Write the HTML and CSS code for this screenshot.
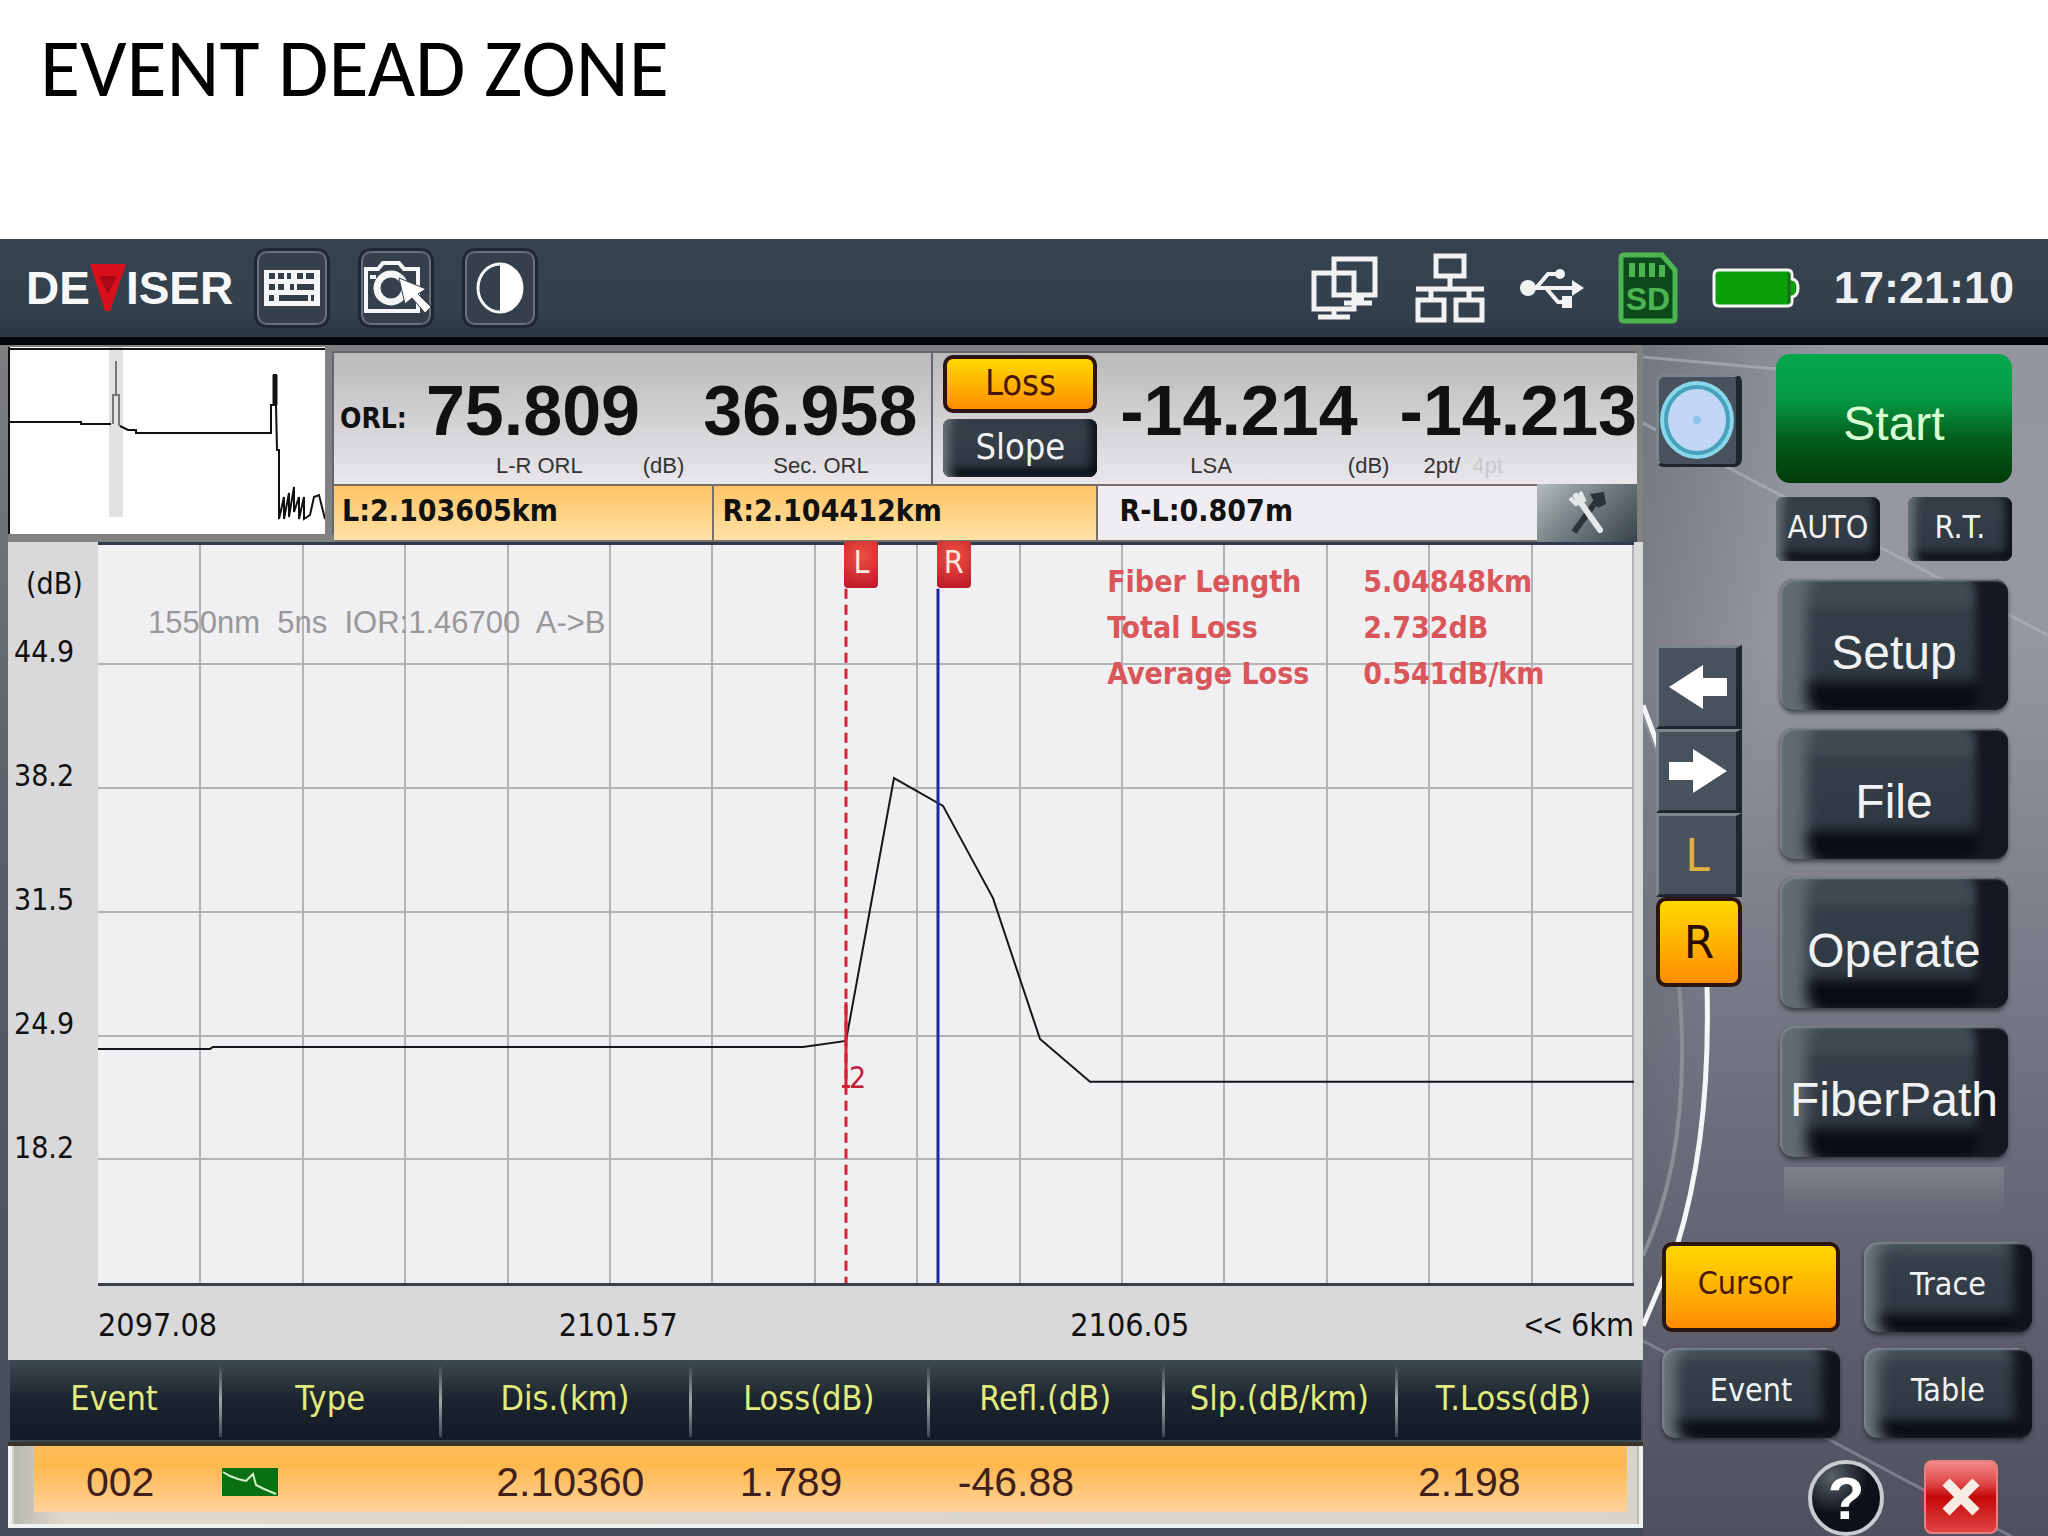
FILE: index.html
```html
<!DOCTYPE html>
<html lang="en">
<head>
    <meta charset="UTF-8">
    <meta name="viewport" content="width=device-width, initial-scale=1.0">
    <title>Event Dead Zone</title>
    <link rel="stylesheet" href="styles.css">
</head>
<body>

    <h1>EVENT DEAD ZONE</h1>

    <div class="device">

        <!-- Top bar -->
        <header class="topbar">
            <div class="logo">
                <span>DE</span>
                <svg width="36" height="48" viewBox="0 0 36 48"><path d="M0 0H36L20 47H15Z" fill="#d8101c"/><path d="M9 12L18 30L27 12" fill="#a90814"/></svg>
                <span>ISER</span>
            </div>
            <div class="tools">
                <button class="tool" aria-label="Keyboard">
                    <svg width="60" height="60" viewBox="0 0 60 60">
                        <path d="M2 12H58V48H2Z" fill="#f4f6f8"/>
                        <path d="M7 18H13M16 18H22M25 18H29M35 18H41M44 18H52M7 29H13M16 29H22M28 29H32M35 29H52M7 40H12M17 40H46M49 40H52" stroke="#333e48" stroke-width="6"/>
                    </svg>
                </button>
                <button class="tool" aria-label="Screenshot">
                    <svg width="70" height="60" viewBox="0 0 70 60">
                        <path d="M5 11H17L22 5H38L43 11H57V53H5Z" fill="none" stroke="#f4f6f8" stroke-width="4"/>
                        <path d="M9 19H15" stroke="#f4f6f8" stroke-width="4"/>
                        <circle cx="30" cy="30" r="14" fill="none" stroke="#f4f6f8" stroke-width="7"/>
                        <path d="M38 20L44 46L51 40L64 55L70 49L57 36L65 31Z" fill="#fff" stroke="#333e48" stroke-width="1"/>
                    </svg>
                </button>
                <button class="tool" aria-label="Contrast">
                    <svg width="60" height="60" viewBox="0 0 60 60">
                        <ellipse cx="30" cy="30" rx="22" ry="24" fill="none" stroke="#f4f6f8" stroke-width="3"/>
                        <path d="M30 6A22 24 0 0 1 30 54Z" fill="#fff"/>
                    </svg>
                </button>
            </div>
            <div class="status">
                <svg width="70" height="70" viewBox="0 0 70 70" fill="none" stroke="#f0f2f4" stroke-width="5">
                    <path d="M24 6H65V42H24ZM4 20H44V56H4Z"/>
                    <path d="M34 50H62M24 56V62M8 64H40"/>
                    <path d="M44 45H54" stroke-width="6"/>
                </svg>
                <svg width="72" height="72" viewBox="0 0 72 72" fill="none" stroke="#f0f2f4" stroke-width="5">
                    <path d="M22 4H50V24H22ZM4 48H30V68H4ZM42 48H68V68H42Z"/>
                    <path d="M36 24V36M2 37H70M17 37V48M55 37V48"/>
                </svg>
                <svg width="64" height="42" viewBox="0 0 64 42" fill="none" stroke="#f0f2f4" stroke-width="4">
                    <circle cx="8" cy="21" r="8" fill="#f0f2f4" stroke="none"/>
                    <path d="M8 21H55M16 21L28 7H38M26 21L38 35H46"/>
                    <path d="M52 13L64 21L52 29Z" fill="#f0f2f4" stroke="none"/>
                    <circle cx="40" cy="7" r="5" fill="#f0f2f4" stroke="none"/>
                    <path d="M42 29H52V41H42Z" fill="#f0f2f4" stroke="none"/>
                </svg>
                <svg width="60" height="72" viewBox="0 0 60 72">
                    <path d="M5 3H44L57 18V66Q57 69 54 69H6Q3 69 3 66V6Q3 3 6 3Z" fill="#0c4a1c" stroke="#4db452" stroke-width="5"/>
                    <path d="M14 11V25M24 11V25M34 11V25M44 13V25" stroke="#4db452" stroke-width="6"/>
                    <text x="30" y="58" class="sd-text">SD</text>
                </svg>
                <svg width="88" height="42" viewBox="0 0 88 42">
                    <path d="M7 3H76Q80 3 80 8V12Q86 13 86 21Q86 29 80 30V34Q80 39 76 39H7Q2 39 2 34V8Q2 3 7 3Z" fill="#0aa00a" stroke="#f4f6f8" stroke-width="3"/>
                    <path d="M77 6V36" stroke="#1f6b24" stroke-width="3"/>
                </svg>
                <time>17:21:10</time>
            </div>
        </header>

        <div class="workspace">
            <main class="main">

                <section class="summary">
                    <svg class="overview" viewBox="0 0 317 187" preserveAspectRatio="none">
                        <path d="M108 0V170" stroke="#e2e2e2" stroke-width="14"/>
                        <path d="M1 0V187M1 2H317" stroke="#111" stroke-width="2" fill="none"/>
                        <path d="M1 62V75H73V77H103" stroke="#111" stroke-width="2" fill="none"/>
                        <path d="M105 77V48H108V14V48H111V79" stroke="#777" stroke-width="2" fill="none"/>
                        <path d="M112 79L120 83H128V86H263V58H266V28H268V58L269 103H271V172L276 150V172L281 146V170L286 140V165L291 150V172L296 150V172L302 168L306 150L311 148L317 172" stroke="#111" stroke-width="2" fill="none"/>
                        <path d="M267 28V58" stroke="#111" stroke-width="5"/>
                    </svg>

                    <div class="readings">
                        <div class="reading orl">
                            <span class="orl-label">ORL:</span>
                            <div class="value-box">
                                <strong>75.809</strong>
                                <div class="caption"><span>L-R ORL</span><span>(dB)</span></div>
                            </div>
                            <div class="value-box">
                                <strong>36.958</strong>
                                <div class="caption"><span>Sec. ORL</span></div>
                            </div>
                        </div>
                        <div class="reading switch">
                            <button class="btn-yellow mode">Loss</button>
                            <button class="btn-dark mode">Slope</button>
                        </div>
                        <div class="reading loss">
                            <div class="value-box">
                                <strong>-14.214</strong>
                                <div class="caption"><span>LSA</span><span>(dB)</span></div>
                            </div>
                            <div class="value-box">
                                <strong>-14.213</strong>
                                <div class="caption points"><span>2pt/</span><span class="off">4pt</span></div>
                            </div>
                        </div>
                    </div>

                    <div class="cursors">
                        <div class="cursor-cell">L:2.103605km</div>
                        <div class="cursor-cell">R:2.104412km</div>
                        <div class="cursor-cell plain">R-L:0.807m</div>
                        <button class="settings" aria-label="Settings">
                            <svg width="50" height="50" viewBox="0 0 50 50">
                                <path d="M38 8L12 44" stroke="#2b3238" stroke-width="6"/>
                                <path d="M28 6L42 4L44 16L36 20Z" fill="#2b3238"/>
                                <path d="M14 8L38 42" stroke="#e4e8e8" stroke-width="6" stroke-linecap="round"/>
                                <path d="M8 10L14 16L22 12L18 4" fill="none" stroke="#e4e8e8" stroke-width="4"/>
                            </svg>
                        </button>
                    </div>
                </section>

                <section class="chart">
                    <div class="y-axis">
                        <div><span>(dB)</span><span>44.9</span></div>
                        <div><span>38.2</span></div>
                        <div><span>31.5</span></div>
                        <div><span>24.9</span></div>
                        <div><span>18.2</span></div>
                        <div></div>
                    </div>
                    <div class="plot">
                        <svg viewBox="0 0 1536 744" preserveAspectRatio="none">
                            <path class="grid-line" d="M102 0V744M205 0V744M307 0V744M410 0V744M512 0V744M614 0V744M717 0V744M819 0V744M922 0V744M1024 0V744M1126 0V744M1229 0V744M1331 0V744M1434 0V744M1535 0V744M0 120H1536M0 245H1536M0 370H1536M0 495H1536M0 619H1536"/>
                            <path class="trace" d="M0 508H112L115 506H705L748 500L796 235L845 263L895 356L942 498L992 541H1536"/>
                            <path class="marker-l" d="M748 44V744"/>
                            <path class="event-tick" d="M748 461V546M744 546H752"/>
                            <path class="marker-r" d="M840 44V744"/>
                        </svg>
                        <span class="tag tag-l">L</span>
                        <span class="tag tag-r">R</span>
                        <span class="event-no">2</span>
                        <p class="params">1550nm&nbsp; 5ns&nbsp; IOR:1.46700&nbsp; A-&gt;B</p>
                        <dl class="fiber">
                            <dt>Fiber Length</dt><dd>5.04848km</dd>
                            <dt>Total Loss</dt><dd>2.732dB</dd>
                            <dt>Average Loss</dt><dd>0.541dB/km</dd>
                        </dl>
                    </div>
                    <div class="x-axis">
                        <span>2097.08</span>
                        <span>2101.57</span>
                        <span>2106.05</span>
                        <span class="range"><i>&lt;&lt;</i> 6km</span>
                    </div>
                </section>

                <table class="events">
                    <thead>
                        <tr>
                            <th class="c-event">Event</th>
                            <th class="c-type">Type</th>
                            <th class="c-dis">Dis.(km)</th>
                            <th class="c-loss">Loss(dB)</th>
                            <th class="c-refl">Refl.(dB)</th>
                            <th class="c-slp">Slp.(dB/km)</th>
                            <th class="c-total">T.Loss(dB)</th>
                        </tr>
                    </thead>
                    <tbody>
                        <tr>
                            <td class="c-event">002</td>
                            <td class="c-type">
                                <svg width="56" height="28" viewBox="0 0 56 28">
                                    <path d="M0 0H56V28H0Z" fill="#087012"/>
                                    <path d="M1 4L8 8L16 11L24 13L31 6L34 17L42 21L54 26" fill="none" stroke="#d8f0c8" stroke-width="2"/>
                                </svg>
                            </td>
                            <td class="c-dis">2.10360</td>
                            <td class="c-loss">1.789</td>
                            <td class="c-refl">-46.88</td>
                            <td class="c-slp"></td>
                            <td class="c-total">2.198</td>
                        </tr>
                    </tbody>
                </table>
            </main>

            <!-- Right side keys -->
            <aside class="side">
                <svg class="swoosh" viewBox="0 0 405 1190" preserveAspectRatio="none" fill="none">
                    <path d="M0 12L134 24M0 78L405 290" stroke="#b4b6bc" stroke-width="3" opacity=".6"/>
                    <path d="M0 370Q80 560 36 640Q50 800 0 910" stroke="#8b8f95" stroke-width="4"/>
                    <path d="M0 360Q62 520 64 640Q68 790 34 900L0 980" stroke="#f4f6f8" stroke-width="5"/>
                    <path d="M0 995L405 1210" stroke="#8f929a" stroke-width="3" opacity=".7"/>
                </svg>

                <div class="keys">
                    <div class="cursor-keys">
                        <button class="key target" aria-label="Target">
                            <svg width="78" height="86" viewBox="0 0 78 86">
                                <ellipse cx="38" cy="42" rx="37" ry="39" fill="#8ad6ea"/>
                                <ellipse cx="38" cy="42" rx="31" ry="33" fill="#c2d6f8" stroke="#46a3ba" stroke-width="4"/>
                                <circle cx="38" cy="42" r="4" fill="#8cc4ee"/>
                            </svg>
                        </button>
                        <div class="stack">
                            <button class="key" aria-label="Left">
                                <svg width="58" height="44" viewBox="0 0 58 44"><path d="M0 22L34 0V13H58V31H34V44Z" fill="#fff"/></svg>
                            </button>
                            <button class="key" aria-label="Right">
                                <svg width="58" height="44" viewBox="0 0 58 44"><path d="M58 22L24 0V13H0V31H24V44Z" fill="#fff"/></svg>
                            </button>
                            <button class="key letter">L</button>
                            <button class="key btn-yellow letter">R</button>
                        </div>
                    </div>

                    <div class="menu">
                        <button class="start">Start</button>
                        <div class="pair">
                            <button class="btn-dark small">AUTO</button>
                            <button class="btn-dark small">R.T.</button>
                        </div>
                        <button class="btn-dark big">Setup</button>
                        <button class="btn-dark big">File</button>
                        <button class="btn-dark big">Operate</button>
                        <button class="btn-dark big">FiberPath</button>
                    </div>
                </div>

                <div class="tabs">
                    <button class="btn-yellow tab">Cursor</button>
                    <button class="btn-dark tab">Trace</button>
                    <button class="btn-dark tab">Event</button>
                    <button class="btn-dark tab">Table</button>
                </div>

                <div class="foot">
                    <button class="help">?</button>
                    <button class="close" aria-label="Close">
                        <svg width="40" height="40" viewBox="0 0 40 40"><path d="M5 5L35 35M35 5L5 35" stroke="#f6ece4" stroke-width="10"/></svg>
                    </button>
                </div>
            </aside>
        </div>
    </div>

</body>
</html>
```
FILE: styles.css
```css
* {
    box-sizing: border-box;
}

body {
    margin: 0;
    min-height: 100vh;
    display: flex;
    flex-direction: column;
    background: #fff;
    font-family: "DejaVu Sans Condensed", "DejaVu Sans", sans-serif;
    color: #111;
}

h1 {
    margin: 0;
    padding: 20px 40px 123px;
    font-family: Carlito, Lato, sans-serif;
    font-size: 82px;
    font-weight: 400;
    line-height: 96px;
    color: #000;
}

button {
    border: none;
    padding: 0;
    font-family: inherit;
    cursor: pointer;
    display: flex;
    align-items: center;
    justify-content: center;
}

svg {
    display: block;
    flex: none;
}

.device {
    flex: 1;
    display: flex;
    flex-direction: column;
    background: #5f6770;
}

/* Top bar */
.topbar {
    display: flex;
    align-items: center;
    height: 106px;
    padding: 0 34px 0 26px;
    background: linear-gradient(#35434f, #34414d 70%, #2d3843);
    border-bottom: 8px solid #030508;
}

.logo {
    display: flex;
    align-items: center;
    font-family: "Liberation Sans", sans-serif;
    font-size: 46px;
    font-weight: 700;
    color: #f6f8fa;
}

.tools {
    display: flex;
    gap: 34px;
    margin-left: 24px;
}

.tool {
    width: 70px;
    height: 74px;
    background: #35404a;
    border: 2px solid #66717b;
    border-radius: 10px;
    box-shadow: 0 0 0 3px #1f2831;
}

.status {
    display: flex;
    align-items: center;
    gap: 34px;
    margin-left: auto;
}

.sd-text {
    font-family: "Liberation Sans", sans-serif;
    font-size: 32px;
    font-weight: 700;
    fill: #4db452;
    text-anchor: middle;
}

.status time {
    font-family: "Liberation Sans", sans-serif;
    font-size: 45px;
    font-weight: 700;
    color: #eef0f2;
}

/* Work area */
.workspace {
    flex: 1;
    display: grid;
    grid-template-columns: minmax(0, 1fr) 405px;
}

.main {
    display: flex;
    flex-direction: column;
    padding: 2px 0 8px 8px;
    background: linear-gradient(#7d7e80, #56616b 40%, #454b57);
}

.summary {
    display: grid;
    grid-template-columns: 317px minmax(0, 1fr);
    grid-template-rows: 137px 58px;
    column-gap: 7px;
    padding-right: 6px;
    background: #808183;
}

.overview {
    grid-row: 1 / 3;
    width: 100%;
    height: 187px;
    background: #fff;
}

.readings {
    display: grid;
    grid-template-columns: 46% 12.5% minmax(0, 1fr);
    margin-top: 4px;
    border-top: 2px solid #66676a;
    border-left: 2px solid #66676a;
    background: linear-gradient(#bab9bb, #e9e7eb);
}

.reading {
    display: flex;
    justify-content: space-between;
}

.orl {
    padding: 0 14px 0 6px;
    border-right: 2px solid #66676a;
}

.orl-label {
    margin-top: 48px;
    font-size: 28px;
    font-weight: 700;
    line-height: 36px;
}

.value-box strong {
    display: block;
    padding-top: 16px;
    font-family: "Liberation Sans", sans-serif;
    font-size: 70px;
    line-height: 84px;
}

.caption {
    display: flex;
    gap: 60px;
    padding-left: 70px;
    font-family: "Liberation Sans", sans-serif;
    font-size: 22px;
    line-height: 26px;
    color: #333;
}

.caption.points {
    gap: 12px;
    padding-left: 24px;
}

.caption .off {
    color: #c9c7cc;
}

.switch {
    flex-direction: column;
    justify-content: flex-start;
    gap: 6px;
    padding: 2px 0 0 10px;
}

.mode {
    width: 154px;
    height: 58px;
    font-size: 36px;
}

.loss {
    padding-left: 24px;
}

.loss .caption:not(.points) {
    gap: 116px;
}

.cursors {
    display: grid;
    grid-template-columns: 29.2% 29.4% minmax(0, 1fr) 100px;
    height: 50px;
    border-left: 2px solid #66676a;
}

.cursor-cell {
    padding-left: 8px;
    border: 2px solid #77706a;
    border-left: none;
    font-size: 30px;
    font-weight: 700;
    line-height: 50px;
    background: linear-gradient(#ffc465, #ffe2a6);
}

.cursor-cell.plain {
    padding-left: 22px;
    border-right: none;
    background: #efedf1;
}

.settings {
    height: 58px;
    background: linear-gradient(135deg, #b4bbbc, #6f7b80 50%, #37424a);
}

/* Chart */
.chart {
    flex: 1;
    display: grid;
    grid-template-columns: 90px minmax(0, 1fr);
    grid-template-rows: minmax(0, 1fr) 74px;
    padding-right: 9px;
    background: #d9d9db;
}

.y-axis {
    display: grid;
    grid-template-rows: repeat(6, 1fr);
    font-size: 30px;
    line-height: 28px;
}

.y-axis div {
    display: flex;
    flex-direction: column;
    justify-content: flex-end;
    padding-left: 6px;
}

.y-axis div:first-child {
    justify-content: space-between;
    padding-top: 28px;
}

.y-axis div:first-child span:first-child {
    padding-left: 12px;
}

.plot {
    position: relative;
    border-top: 3px solid #2f3b4c;
    border-bottom: 3px solid #3a4048;
    background: #f0eff1;
}

.plot svg {
    position: absolute;
    width: 100%;
    height: 100%;
}

.plot path {
    fill: none;
    vector-effect: non-scaling-stroke;
}

.grid-line {
    stroke: #b3b2b5;
    stroke-width: 2;
}

.trace {
    stroke: #16161a;
    stroke-width: 2;
}

.marker-l {
    stroke: #d6203a;
    stroke-width: 3;
    stroke-dasharray: 10 6;
}

.event-tick {
    stroke: #d6203a;
    stroke-width: 3;
}

.marker-r {
    stroke: #2028a0;
    stroke-width: 3;
}

.tag {
    position: absolute;
    top: -4px;
    width: 34px;
    height: 47px;
    border-radius: 4px;
    font-size: 32px;
    line-height: 42px;
    text-align: center;
    color: #ffe6e0;
    background: radial-gradient(circle at 50% 30%, #f05040, #b8182a);
}

.tag-l {
    left: 48.6%;
}

.tag-r {
    left: 54.6%;
}

.event-no {
    position: absolute;
    top: 70%;
    left: 48.9%;
    font-size: 30px;
    line-height: 32px;
    color: #c02038;
}

.params {
    position: absolute;
    top: 58px;
    left: 50px;
    margin: 0;
    font-family: "Liberation Sans", sans-serif;
    font-size: 31px;
    line-height: 40px;
    color: #98979a;
}

.fiber {
    position: absolute;
    top: 14px;
    left: 65.7%;
    display: grid;
    grid-template-columns: 256px auto;
    margin: 0;
    font-size: 30px;
    font-weight: 700;
    line-height: 46px;
    color: #d9565a;
}

.fiber dd {
    margin: 0;
}

.x-axis {
    grid-column: 2;
    display: grid;
    grid-template-columns: 30% 33.3% 1fr auto;
    font-size: 32px;
    line-height: 78px;
}

.range i {
    font-family: "Liberation Sans", sans-serif;
    font-style: normal;
}

/* Event table */
.events {
    width: 100%;
    border-collapse: collapse;
    table-layout: fixed;
}

.events thead tr {
    height: 84px;
    background: linear-gradient(#3e4a51, #1b242e 50%, #141a26);
    border-bottom: 4px solid #3a3428;
}

.events th {
    padding: 0 4px 6px 0;
    font-size: 34px;
    font-weight: 400;
    color: #e2ec7c;
    background: linear-gradient(#3a464e, #a0a6a8 50%, #3a464e) right center / 3px 72px no-repeat;
}

.events th:last-child {
    padding-right: 12px;
    background: none;
}

.events tbody tr {
    height: 82px;
    background:
        linear-gradient(#ffc060, #ffb84c 30%, #ffd29a) 20px top / calc(100% - 30px) 68px no-repeat,
        linear-gradient(90deg, #b8b8b0, #e0d8cc 3%, #d8d4cc);
    border: 4px solid #f0f2f0;
    border-top: none;
}

.events td {
    padding: 0 0 6px;
    font-family: "Liberation Sans", sans-serif;
    font-size: 41px;
    color: #40201c;
}

.c-event { width: 13%; }
.c-type { width: 13.5%; }
.c-dis { width: 15.3%; }
.c-loss { width: 14.6%; }
.c-refl { width: 14.4%; }
.c-slp { width: 14.3%; }

td.c-event { padding-left: 74px; }
td.c-dis { padding-left: 54px; }
td.c-loss { padding-left: 48px; }
td.c-refl { padding-left: 28px; }
td.c-total { padding-left: 20px; }

/* Side panel */
.side {
    position: relative;
    background: linear-gradient(100deg, rgba(50, 58, 62, .35), transparent 30%), linear-gradient(#94969f, #9496a1 25%, #6c6f7b 65%, #4e505d);
}

.swoosh {
    position: absolute;
    inset: 0;
    width: 100%;
    height: 100%;
}

.keys,
.tabs,
.foot {
    position: relative;
    display: flex;
}

.keys {
    gap: 34px;
    padding: 9px 36px 0 13px;
}

.cursor-keys {
    width: 86px;
}

.key {
    width: 100%;
    height: 84px;
    background: #48525c;
    border-top: 3px solid #7b858c;
    border-left: 3px solid #7b858c;
    border-right: 6px solid #1d252e;
    border-bottom: 3px solid #1d252e;
}

.target {
    height: 93px;
    margin: 20px 0 178px;
    border-radius: 8px;
}

.stack .letter {
    font-family: "DejaVu Sans", sans-serif;
    font-size: 44px;
    color: #e0b040;
}

.btn-yellow {
    color: #4a1608;
    background: linear-gradient(#ffd800, #ffb400 50%, #ff8c00);
    border: 4px solid #2c1410;
    border-radius: 10px;
}

.stack .btn-yellow {
    height: 90px;
    color: #2a0c04;
}

.menu {
    flex: 1;
    display: flex;
    flex-direction: column;
}

.menu .start {
    height: 129px;
    font-family: "Liberation Sans", sans-serif;
    font-size: 48px;
    color: #d8ffd4;
    background: linear-gradient(#04a84c, #069a44 35%, #02601c 65%, #023a0a);
    border-radius: 14px;
    padding-top: 10px;
}

.pair {
    display: flex;
    justify-content: space-between;
    margin: 14px 0 18px;
}

.btn-dark {
    color: #f0f2f4;
    border-radius: 14px;
    background: linear-gradient(#38424b, #2d3640);
    box-shadow:
        inset 2px 2px 2px #7c848c,
        inset 22px 0 14px -8px #6a737b,
        inset -24px 0 12px -6px #10131c,
        inset 0 -24px 10px -6px #0c0f17,
        inset 0 16px 8px -4px #46515a,
        0 3px 4px rgba(20, 24, 32, .6);
}

.small {
    width: 104px;
    height: 64px;
    padding-bottom: 4px;
    font-size: 32px;
}

.small,
.mode.btn-dark {
    border-radius: 8px;
    box-shadow:
        inset 10px 0 10px -4px #6c757c,
        inset -8px 0 10px -2px #0c1018,
        inset 0 -12px 8px -4px #0c0f17;
}

.mode {
    padding-bottom: 4px;
}

.big {
    height: 131px;
    margin: 0 4px 18px;
    padding-top: 16px;
    font-family: "Liberation Sans", sans-serif;
    font-size: 48px;
    box-shadow:
        inset 2px 2px 2px #7c848c,
        inset 34px 0 14px -8px #626b73,
        inset -38px 0 10px -6px #141722,
        inset 0 -36px 12px -8px #0b0d15,
        inset 0 32px 6px -4px #3f4a53,
        0 3px 4px rgba(20, 24, 32, .6);
}

/* faint reflection under the last key */
.menu::after {
    content: "";
    height: 48px;
    margin: -8px 8px 0;
    background: linear-gradient(rgba(150, 155, 160, .45), transparent);
}

.tabs {
    display: grid;
    grid-template-columns: 178px 168px;
    gap: 16px 24px;
    padding: 27px 0 0 19px;
}

.tab {
    height: 90px;
    font-size: 32px;
    padding-bottom: 6px;
}

.tab.btn-yellow {
    padding: 0 12px 8px 0;
}

.foot {
    gap: 40px;
    padding: 22px 0 0 165px;
}

.help {
    width: 76px;
    height: 76px;
    border: 4px solid #c8ccd0;
    border-radius: 50%;
    background: radial-gradient(circle at 30% 20%, #5a626c, #0c1018 50%);
    font-family: "Liberation Sans", sans-serif;
    font-size: 60px;
    font-weight: 700;
    color: #fff;
}

.close {
    width: 74px;
    height: 74px;
    border: 2px solid #e88080;
    border-radius: 8px;
    background: linear-gradient(#f4888a, #e04848 30%, #c40808 50%, #e04444);
}
```
